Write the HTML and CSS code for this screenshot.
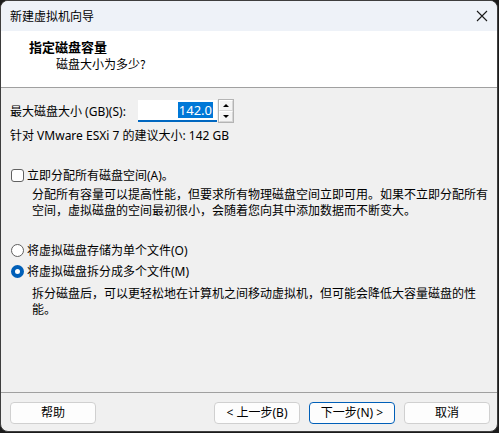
FILE: index.html
```html
<!DOCTYPE html>
<html lang="zh-CN">
<head>
<meta charset="utf-8">
<title>新建虚拟机向导</title>
<link rel="stylesheet" href="styles.css">
</head>
<body>
<div class="window">
  <div class="titlebar">
    <span class="title">新建虚拟机向导</span>
    <span class="close">
      <svg width="12" height="12" viewBox="0 0 12 12"><path d="M1 1 L11 11 M11 1 L1 11" stroke="#1a1a1a" stroke-width="1.1" fill="none"/></svg>
    </span>
  </div>
  <div class="header">
    <div class="h-title">指定磁盘容量</div>
    <div class="h-sub">磁盘大小为多少?</div>
  </div>
  <div class="content">
    <div class="size-row">
      <label class="size-label">最大磁盘大小 (GB)(S):</label>
      <div class="numbox"><span class="sel">142.0</span></div>
      <div class="spin">
        <div class="spin-btn"><span class="tri-up"></span></div>
        <div class="spin-btn"><span class="tri-down"></span></div>
      </div>
    </div>
    <div class="hint">针对 VMware ESXi 7 的建议大小: 142 GB</div>

    <div class="opt check-row">
      <span class="checkbox"></span>
      <span>立即分配所有磁盘空间(A)。</span>
    </div>
    <div class="desc desc1">分配所有容量可以提高性能，但要求所有物理磁盘空间立即可用。如果不立即分配所有<br>空间，虚拟磁盘的空间最初很小，会随着您向其中添加数据而不断变大。</div>

    <div class="opt radio-row r1">
      <span class="radio"></span>
      <span>将虚拟磁盘存储为单个文件(O)</span>
    </div>
    <div class="opt radio-row r2">
      <span class="radio on"></span>
      <span>将虚拟磁盘拆分成多个文件(M)</span>
    </div>
    <div class="desc desc2">拆分磁盘后，可以更轻松地在计算机之间移动虚拟机，但可能会降低大容量磁盘的性<br>能。</div>
  </div>
  <div class="footer">
    <button class="btn">帮助</button>
    <button class="btn back">&lt; 上一步(B)</button>
    <button class="btn default">下一步(N) &gt;</button>
    <button class="btn">取消</button>
  </div>
</div>
</body>
</html>
```
FILE: styles.css
```css
html, body {
  margin: 0;
  padding: 0;
  background: #1c1c1c;
}
body {
  width: 499px;
  height: 433px;
  overflow: hidden;
  font-family: "Noto Sans", "Noto Sans CJK SC", sans-serif;
  font-size: 12px;
  color: #000;
}
.window {
  box-sizing: border-box;
  width: 498px;
  height: 432px;
  border: 1px solid #3e3e3e;
  border-radius: 8px;
  overflow: hidden;
  background: #f0f0f0;
  display: flex;
  flex-direction: column;
}
.titlebar {
  height: 30px;
  flex: none;
  background: #eef2f8;
  display: flex;
  align-items: center;
  padding-left: 9px;
  padding-bottom: 1px;
  box-sizing: border-box;
  font-family: "Noto Sans CJK SC", sans-serif;
}
.title {
  flex: 1;
  line-height: 17px;
}
.close {
  width: 12px;
  height: 12px;
  margin-right: 9px;
  display: flex;
}
.header {
  height: 57px;
  flex: none;
  box-sizing: border-box;
  background: #fff;
  border-bottom: 1px solid #a0a0a0;
  padding: 7px 0 0 28px;
  font-family: "Noto Sans CJK SC", sans-serif;
}
.h-title {
  font-weight: bold;
  font-size: 13px;
  line-height: 17px;
}
.h-sub {
  line-height: 17px;
  padding-left: 27px;
}
.content {
  flex: 1;
  padding: 11px 9px 0 9px;
}
.size-row {
  height: 24px;
  display: flex;
  align-items: center;
}
.size-label {
  width: 128px;
  flex: none;
  line-height: 17px;
}
.numbox {
  box-sizing: border-box;
  width: 79px;
  height: 22px;
  background: #fff;
  border-bottom: 2px solid #0067c0;
  display: flex;
  align-items: center;
  justify-content: flex-end;
  padding-right: 4px;
}
.sel {
  background: #0078d7;
  color: #fff;
  font-family: "Noto Sans", sans-serif;
  font-size: 13px;
  line-height: 16px;
  padding: 0 1px;
}
.spin {
  box-sizing: border-box;
  width: 16px;
  height: 24px;
  margin-left: 1px;
  border: 1px solid #b4b4b4;
  display: flex;
  flex-direction: column;
  background: #f4f4f4;
}
.spin-btn {
  flex: 1;
  display: flex;
  align-items: center;
  justify-content: center;
  border: 1px solid #ffffff;
  border-right-color: #d6d6d6;
  border-bottom-color: #d6d6d6;
}
.tri-up, .tri-down {
  width: 0;
  height: 0;
  border-left: 3px solid transparent;
  border-right: 3px solid transparent;
}
.tri-up { border-bottom: 3px solid #000; }
.tri-down { border-top: 3px solid #000; }
.hint {
  margin-top: 4px;
  line-height: 17px;
}
.opt {
  display: flex;
  align-items: center;
  line-height: 17px;
}
.check-row { margin-top: 23px; }
.checkbox {
  box-sizing: border-box;
  width: 13px;
  height: 13px;
  margin: 0 3px 0 1px;
  border: 1px solid #616161;
  border-radius: 3px;
  background: #fff;
}
.desc {
  padding-left: 22px;
  line-height: 16px;
  font-family: "Noto Sans CJK SC", sans-serif;
  white-space: nowrap;
}
.desc1 { margin-top: 2px; }
.r1 { margin-top: 24px; }
.r2 { margin-top: 4px; }
.desc2 { margin-top: 5px; }
.radio {
  box-sizing: border-box;
  width: 13px;
  height: 13px;
  margin: 0 3px 0 1px;
  border: 1px solid #5f5f5f;
  border-radius: 50%;
  background: #fff;
}
.radio.on {
  border: 4px solid #005fb8;
  background: #fff;
}
.footer {
  flex: none;
  border-top: 1px solid #a0a0a0;
  padding: 9px 7px 7px 9px;
  display: flex;
  gap: 9px;
}
.btn {
  box-sizing: border-box;
  width: 86px;
  height: 22px;
  padding: 0;
  margin: 0;
  background: #fdfdfd;
  border: 1px solid #d0d0d0;
  border-radius: 4px;
  font-family: "Noto Sans", "Noto Sans CJK SC", sans-serif;
  font-size: 12px;
  line-height: 18px;
  color: #000;
}
.btn.back { margin-left: auto; }
.btn.default { border-color: #005fb8; }
```
